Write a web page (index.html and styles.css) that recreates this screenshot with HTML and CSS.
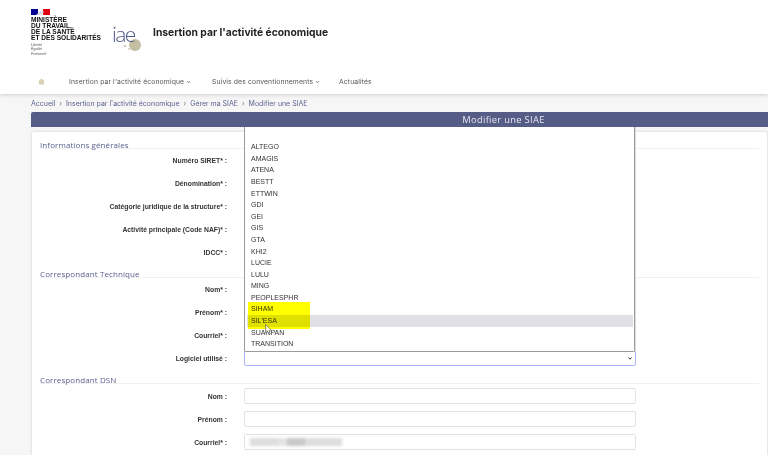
FILE: index.html
```html
<!DOCTYPE html>
<html lang="fr">
<head>
<meta charset="utf-8">
<title>Modifier une SIAE</title>
<link rel="stylesheet" href="styles.css">
</head>
<body>
<div class="page">
  <header class="header">
    <div class="brand">
      <div class="ministry">
        <svg class="flag" width="19" height="6" viewBox="0 0 19 6"><rect width="7" height="6" fill="#000091"/><rect x="7" width="5" height="6" fill="#fff"/><rect x="12" width="7" height="6" fill="#e1000f"/><path d="M5 6 C7 4 9 3 11 1 L13 3 L10 6Z" fill="#d8d8e4"/></svg>
        <div class="ministry-name">MINISTÈRE<br>DU TRAVAIL,<br>DE LA SANTÉ<br>ET DES SOLIDARITÉS</div>
        <div class="motto">Liberté<br>Égalité<br>Fraternité</div>
      </div>
      <div class="iae">
        <svg width="32" height="26" viewBox="0 0 32 26"><circle cx="3" cy="1.5" r="1" fill="#c9c4ae"/><circle cx="23" cy="19" r="6" fill="#c4bea2"/><circle cx="13" cy="20" r="1.2" fill="#cfcab8"/><circle cx="17" cy="23" r="1" fill="#cfcab8"/><text x="0" y="16" class="iae-text">iae</text></svg>
      </div>
      <div class="app-title">Insertion par l'activité économique</div>
    </div>
    <nav class="nav">
      <svg class="home" width="7" height="7" viewBox="0 0 7 7"><path d="M3.5 .5 L7 3.5 H6 V6.5 H1 V3.5 H0Z" fill="#d8d2b4"/></svg>
      <span class="nav-item nav-first">Insertion par l'activité économique <i class="caret">⌄</i></span>
      <span class="nav-item nav-second">Suivis des conventionnements <i class="caret">⌄</i></span>
      <span class="nav-item">Actualités</span>
    </nav>
  </header>

  <div class="crumbs"><span>Accueil</span><b>›</b><span>Insertion par l'activité économique</span><b>›</b><span>Gérer ma SIAE</span><b>›</b><span>Modifier une SIAE</span></div>

  <main class="main">
    <h1 class="title">Modifier une SIAE</h1>
    <form class="card">
      <div class="legend">Informations générales</div>
      <div class="rows">
        <div class="row"><label>Numéro SIRET* :</label><div class="field"></div></div>
        <div class="row"><label>Dénomination* :</label><div class="field"></div></div>
        <div class="row"><label>Catégorie juridique de la structure* :</label><div class="field"></div></div>
        <div class="row"><label>Activité principale (Code NAF)* :</label><div class="field"></div></div>
        <div class="row"><label>IDCC* :</label><div class="field"></div></div>
      </div>
      <div class="legend">Correspondant Technique</div>
      <div class="rows">
        <div class="row"><label>Nom* :</label><div class="field"></div></div>
        <div class="row"><label>Prénom* :</label><div class="field"></div></div>
        <div class="row"><label>Courriel* :</label><div class="field"></div></div>
        <div class="row"><label>Logiciel utilisé :</label><div class="field focus"><svg class="chev" width="4" height="3" viewBox="0 0 4 3"><path d="M.4 .5 L2 2.2 L3.6 .5" fill="none" stroke="#333" stroke-width="1"/></svg></div></div>
      </div>
      <div class="legend legend-dsn">Correspondant DSN</div>
      <div class="rows">
        <div class="row"><label>Nom :</label><div class="field"></div></div>
        <div class="row"><label>Prénom :</label><div class="field"></div></div>
        <div class="row"><label>Courriel* :</label><div class="field"><span class="redacted"></span></div></div>
      </div>
    </form>
  </main>

  <ul class="dropdown">
    <li>ALTEGO</li><li>AMAGIS</li><li>ATENA</li><li>BESTT</li><li>ETTWIN</li><li>GDI</li><li>GEI</li><li>GIS</li><li>GTA</li><li>KHI2</li><li>LUCIE</li><li>LULU</li><li>MING</li><li>PEOPLESPHR</li><li>SIHAM</li><li class="hover">SIL'ESA</li><li>SUANPAN</li><li>TRANSITION</li>
  </ul>
  <div class="marker"></div>
  <svg class="cursor" width="8" height="12" viewBox="0 0 8 12"><path d="M.5 .5 V9 L2.6 7.2 L4 10.5 L5.3 10 L4 6.8 H7Z" fill="#fff" fill-opacity=".7" stroke="#555" stroke-width=".6"/></svg>
</div>
</body>
</html>
```
FILE: styles.css
```css
* { box-sizing: border-box; }
html, body { margin: 0; height: 455px; overflow: hidden; background: #f6f6f6; }
.page { position: relative; width: 768px; height: 455px; overflow: hidden; font-family: "Liberation Sans", Arial, sans-serif; color: #333; filter: blur(.4px); }

.header { height: 94px; background: #fff; box-shadow: 0 1px 4px rgba(0,0,0,.16); padding: 9px 0 0 31px; }
.brand { display: flex; align-items: flex-start; height: 58px; }
.ministry { width: 81px; }
.flag { display: block; margin-bottom: 1px; }
.ministry-name { font-family: "Liberation Sans", sans-serif; font-weight: 700; font-size: 6.6px; line-height: 6px; color: #111; white-space: nowrap; margin-top: 2px; }
.motto { font-style: italic; font-size: 3.6px; line-height: 4.4px; color: #555; margin-top: 2px; }
.iae { width: 41px; margin-top: 17px; }
.iae svg { display: block; overflow: visible; }
.iae-text { font-family: "Open Sans", sans-serif; font-size: 21px; font-weight: 300; fill: #4f5a88; letter-spacing: -1.6px; }
.app-title { font-family: "Inter", sans-serif; font-weight: 700; font-size: 10.3px; color: #222; margin-top: 17px; white-space: nowrap; }

.nav { display: flex; align-items: center; height: 14px; font-family: "Inter", sans-serif; font-size: 6.8px; color: #555; padding-left: 7px; margin-top: 7px; }
.home { flex: none; margin-right: 24px; }
.nav-item { white-space: nowrap; letter-spacing: .12px; }
.nav-first { width: 143px; }
.nav-second { width: 127px; }
.caret { font-style: normal; font-size: 6px; position: relative; top: -1px; }

.crumbs { display: flex; align-items: center; gap: 4px; height: 18px; padding: 0 0 0 31px; font-family: "Inter", sans-serif; font-size: 7px; letter-spacing: -.02px; color: #5d6390; white-space: nowrap; }
.crumbs b { font-weight: 400; color: #777; }

.main { padding-left: 31px; }
.title { margin: 0; height: 15px; padding-left: 208px; background: #555c86; border-radius: 2px 0 0 0; color: #e8e8ee; font-family: "Open Sans", sans-serif; font-weight: 400; font-size: 9.4px; line-height: 16px; letter-spacing: .3px; text-align: center; }
.card { margin: 5px 1px 0 1px; background: #fff; padding: 5px 8px 0; height: 340px; box-shadow: 0 0 3px rgba(0,0,0,.18); border-radius: 2px 2px 0 0; }
.legend { height: 12px; font-family: "Open Sans", sans-serif; font-size: 8px; line-height: 15px; letter-spacing: .1px; color: #5a6190; border-bottom: 1px solid #f1f1f1; margin: 0 0 3px; white-space: nowrap; }
.legend-dsn { margin-bottom: 4px; }
.rows { display: flex; flex-direction: column; gap: 7px; margin-bottom: 6px; }
.row { display: flex; align-items: center; height: 16px; }
.row label { width: 187px; padding-top: 1px; text-align: right; font-weight: 700; font-size: 6.8px; color: #333; flex: none; white-space: nowrap; }
.field { position: relative; margin-left: 17px; width: 391.5px; height: 16px; background: #fff; border: 1px solid #e4e2da; border-radius: 2px; }
.field.focus { border-color: #a9b6fa; }
.chev { position: absolute; right: 3px; top: 6px; }
.redacted { display: block; position: absolute; left: 5px; top: 3px; width: 92px; height: 8px; filter: blur(1.5px); background: linear-gradient(90deg, #ddd 0 30%, #e4e4e4 30% 40%, #c8c8c8 40% 60%, #ddd 60% 100%); }

.dropdown { position: absolute; left: 244px; top: 127px; width: 391px; height: 224.5px; margin: 0; padding: 14.3px 1.5px 0; list-style: none; background: #fff; border: 1px solid #9b9b9b; border-top: 0; border-radius: 0 0 2px 2px; box-shadow: 1px 0 0 #ddd; z-index: 2; }
.dropdown li { height: 11.58px; line-height: 11.58px; padding-left: 4.5px; font-size: 7px; color: #333; white-space: nowrap; }
.dropdown li.hover { background: #e0e0e6; }
.marker { position: absolute; left: 247.5px; top: 302px; width: 62px; height: 26.5px; background: #ffff00; mix-blend-mode: multiply; z-index: 3; }
.cursor { position: absolute; left: 265px; top: 324px; z-index: 4; }
```
